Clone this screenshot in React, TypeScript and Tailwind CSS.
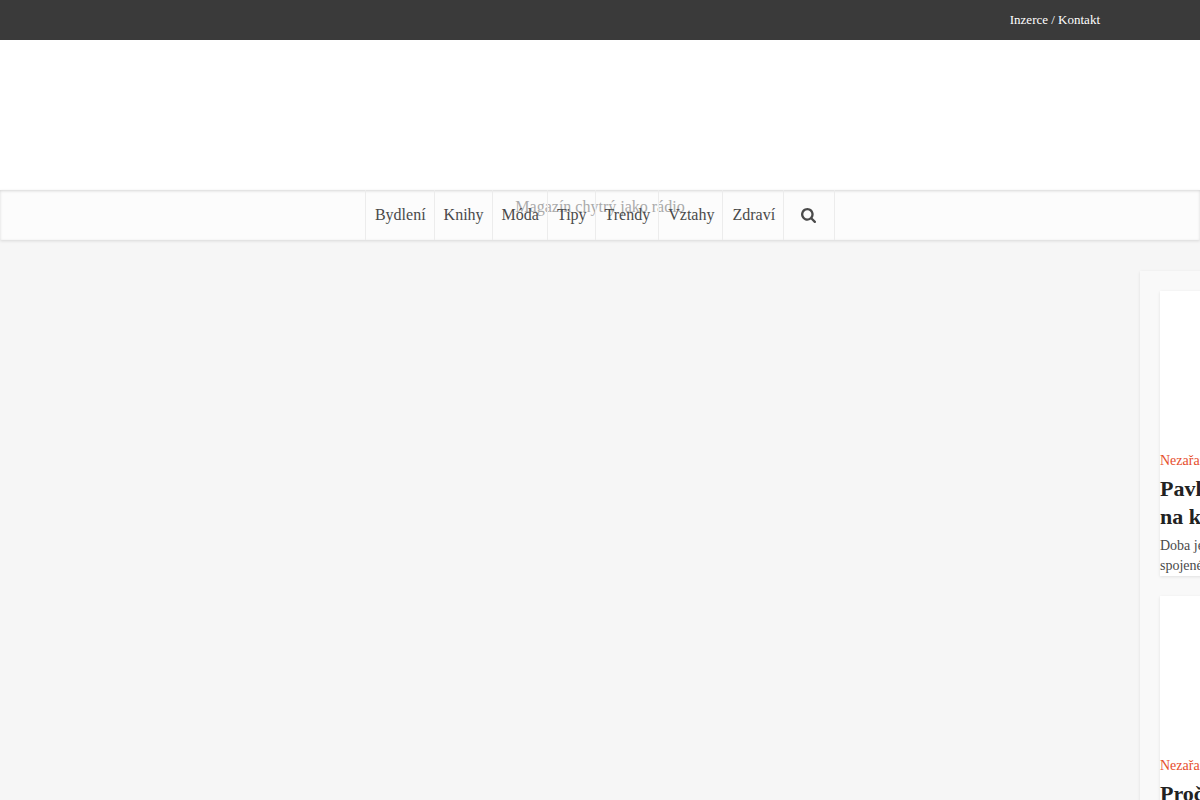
const sections = ['Bydlení', 'Knihy', 'Móda', 'Tipy', 'Trendy', 'Vztahy', 'Zdraví'];

type Article = { category: string; title: string[]; excerpt: string[] };

const articles: Article[] = [
  { category: 'Nezařazené', title: ['Pavl', 'na k'], excerpt: ['Doba je', 'spojené'] },
  { category: 'Nezařazené', title: ['Proč'], excerpt: [] },
];

function SearchIcon() {
  return (
    <svg viewBox="0 0 1664 1664" className="size-[15px] fill-current" aria-hidden="true">
      <path d="M1152 704q0-185-131.5-316.5T704 256 387.5 387.5 256 704t131.5 316.5T704 1152t316.5-131.5T1152 704zm512 832q0 52-38 90t-90 38q-54 0-90-38l-343-342q-179 124-399 124-143 0-273.5-55.5t-225-150-150-225T0 704t55.5-273.5 150-225 225-150T704 0t273.5 55.5 225 150 150 225T1408 704q0 220-124 399l343 343q37 37 37 90z" />
    </svg>
  );
}

function ArticleCard({ category, title, excerpt }: Article) {
  return (
    <article className="min-h-[285px] bg-white whitespace-nowrap shadow-[0_1px_3px_rgba(0,0,0,0.1)]">
      <div className="h-40" />
      <a href="#" className="block text-sm leading-5 text-[#e64e2d]">
        {category}
      </a>
      <h2 className="mt-1 text-[22px] leading-7 font-bold text-[#222]">
        <a href="#">
          {title.map((line) => (
            <span key={line} className="block">{line}</span>
          ))}
        </a>
      </h2>
      <p className="mt-[5px] text-sm leading-5">
        {excerpt.map((line) => (
          <span key={line} className="block">{line}</span>
        ))}
      </p>
    </article>
  );
}

export default function App() {
  return (
    <div className="flex h-screen flex-col overflow-hidden bg-[#f6f6f6] font-['Liberation_Serif',serif] text-[#4a4a4a]">
      <div className="h-10 shrink-0 bg-[#3a3a3a]">
        <div className="mx-auto flex h-full max-w-[1000px] items-center justify-end">
          <a href="#" className="text-[13px] leading-5 text-white">Inzerce / Kontakt</a>
        </div>
      </div>

      <header className="h-[150px] shrink-0 bg-white" />

      <nav className="relative flex h-[50px] shrink-0 justify-center bg-[#fcfcfc] shadow-[inset_0_1px_3px_rgba(0,0,0,0.15),0_1px_3px_rgba(0,0,0,0.12)]">
        <p className="absolute inset-x-0 top-[5px] text-center text-base leading-6 text-[#aaa]">
          Magazín chytrý jako rádio
        </p>
        <ul className="relative flex border-l border-[#ececec]">
          {sections.map((name) => (
            <li key={name} className="flex border-r border-[#ececec]">
              <a href="#" className="flex items-center pr-2 pl-[9px] text-base leading-6">{name}</a>
            </li>
          ))}
          <li className="flex border-r border-[#ececec]">
            <button type="button" aria-label="Hledat" className="flex w-[50px] items-center justify-center pr-px">
              <SearchIcon />
            </button>
          </li>
        </ul>
      </nav>

      <div className="flex min-h-0 flex-1 pt-[31px]">
        <main className="flex-1" />
        <aside className="w-[60px] shrink-0">
          <div className="flex w-[340px] flex-col gap-5 bg-[#f9f9f9] p-5 shadow-[0_1px_3px_rgba(0,0,0,0.1)]">
            {articles.map((article) => (
              <ArticleCard key={article.title[0]} {...article} />
            ))}
          </div>
        </aside>
      </div>
    </div>
  );
}
